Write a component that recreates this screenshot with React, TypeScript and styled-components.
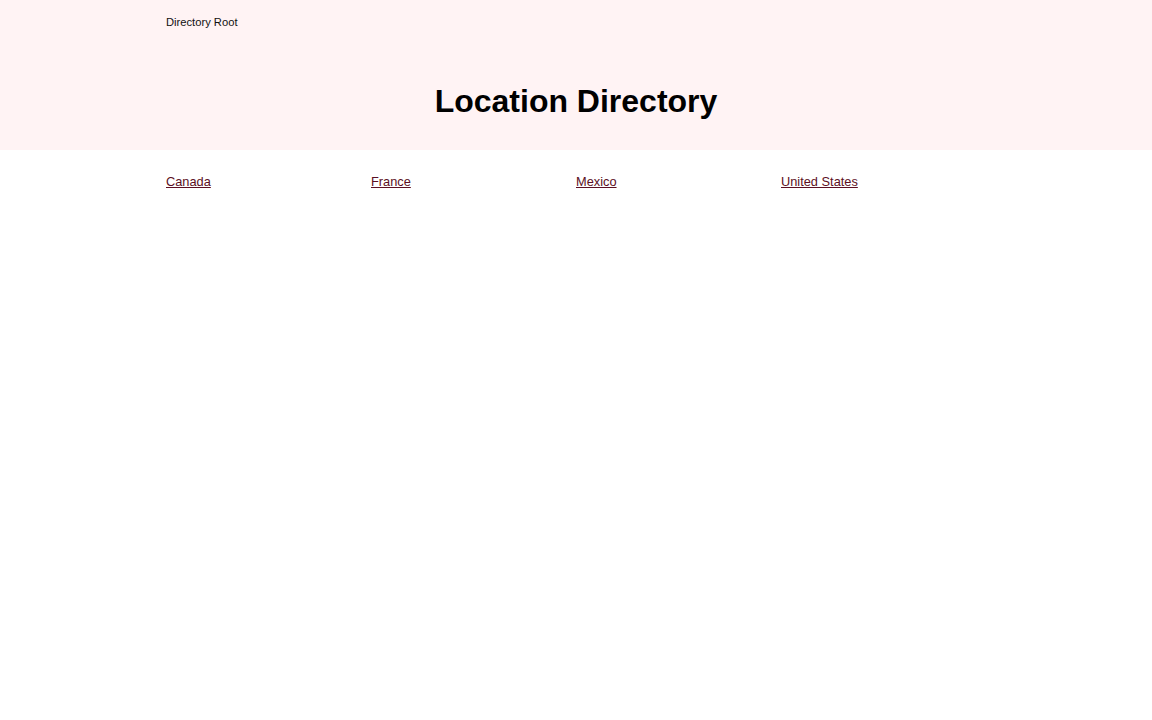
import React from "react";
import styled, { createGlobalStyle } from "styled-components";

const countries = ["Canada", "France", "Mexico", "United States"];

export default function App() {
  return (
    <>
      <GlobalStyle />
      <Header>
        <Container>
          <Breadcrumb>Directory Root</Breadcrumb>
          <Title>Location Directory</Title>
        </Container>
      </Header>
      <Container>
        <LinkGrid>
          {countries.map((c) => (
            <DirLink key={c} href="#">
              {c}
            </DirLink>
          ))}
        </LinkGrid>
      </Container>
    </>
  );
}

// style
const GlobalStyle = createGlobalStyle`
  body {
    margin: 0;
    background: #fff;
    font-family: "Liberation Sans", Arial, sans-serif;
    color: #000;
  }
`;
const Header = styled.header`
  background: #fff3f4;
  height: 150px;
`;
const Container = styled.div`
  width: 820px;
  margin: 0 auto;
`;
const Breadcrumb = styled.div`
  font-size: 11.2px;
  color: #111;
  padding-top: 16px;
  line-height: 13px;
`;
const Title = styled.h1`
  margin: 0;
  margin-top: 52px;
  text-align: center;
  font-size: 32px;
  font-weight: 700;
  line-height: 40px;
`;
const LinkGrid = styled.div`
  display: grid;
  grid-template-columns: repeat(4, 205px);
  padding-top: 174px;
  margin-top: -150px;
`;
const DirLink = styled.a`
  font-size: 12.8px;
  line-height: 16px;
  color: #5c0f23;
  text-decoration: underline;
`;
